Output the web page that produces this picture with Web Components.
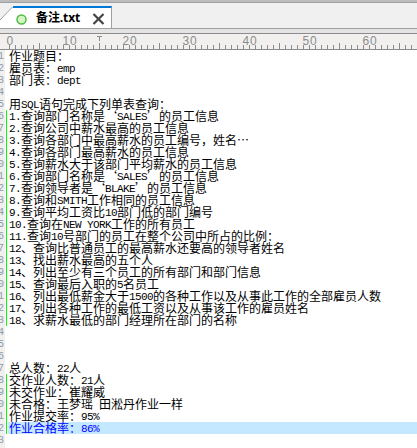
<!DOCTYPE html>
<html lang="zh-CN">
<head>
<meta charset="utf-8">
<title>备注.txt</title>
<style>html,body{margin:0;height:100%;overflow:hidden;background:#fff}</style>
</head>
<body>
<text-editor></text-editor>
<script>
class FileTab extends HTMLElement {
  connectedCallback() {
    this.attachShadow({mode: 'open'}).innerHTML = `
<style>
:host{display:flex;height:22px;font:bold 12px/22px "Open Sans","Noto Sans CJK SC",sans-serif;color:#000}
.slope{width:14px;height:22px;display:block;flex:none}
.tab{box-sizing:border-box;width:98px;height:22px;background:#fff;border-top:2px solid #0078d7;border-right:1px solid #a0a0a0;display:flex;align-items:center;flex:none}
.dot{width:11px;height:11px;margin-left:2px;flex:none;margin-top:2px}
.name{width:46px;margin-left:9px;white-space:nowrap;letter-spacing:-.1px}
.x{width:13px;height:12px;margin-left:10px;flex:none;margin-top:2px}
</style>
<svg class="slope" viewBox="0 0 14 22"><path d="M0 14 12.500 1H14V22H0Z" fill="#fff"/><path d="M0 14 12.500 1" stroke="#a0a0a0" fill="none"/><path d="M13 1H14" stroke="#0078d7" stroke-width="2"/></svg>
<div class="tab">
<svg class="dot" viewBox="0 0 11 11"><circle cx="5.500" cy="5.500" r="4.500" fill="#d2f7c4" stroke="#55b947" stroke-width="1.500"/></svg>
<span class="name"><slot></slot></span>
<svg class="x" viewBox="0 0 13 12"><path d="M1.500 1 11.500 11M11.500 1 1.500 11" stroke="#444" stroke-width="2.200"/></svg>
</div>`;
  }
}
class ColumnRuler extends HTMLElement {
  connectedCallback() {
    let ticks = '', labels = '';
    for (let i = 0; i < 69; i++) {
      const h = i % 10 === 0 ? 4 : i % 5 === 0 ? 6 : 4;
      ticks += `M${9.5 + i * 6} 16V${16 - h}`;
      if (i % 10 === 0) labels += i ? `<text x="${2.5 + i * 6}" y="12">${i / 10}</text><text x="${10 + i * 6}" y="12">0</text>` : `<text x="6.5" y="12">0</text>`;
    }
    this.attachShadow({mode: 'open'}).innerHTML = `
<style>:host{display:block;height:17px}svg{display:block}text{font:12px "Liberation Sans",sans-serif;fill:#8c8c8c}</style>
<svg width="417" height="17"><rect width="417" height="17" fill="#f1f0ee"/><path d="M0 .5H417M0 16.500H417" stroke="#8c8c8c"/><path d="${ticks}M97 3.500H102M99.500 3V8" stroke="#8c8c8c" fill="none"/>${labels}</svg>`;
  }
}
class TextLine extends HTMLElement {
  connectedCallback() {
    const body = (this.getAttribute('text') || '').replace(/[\x20-\x7e]+/g, '<i>$&</i>');
    this.attachShadow({mode: 'open'}).innerHTML = `
<style>
:host{display:flex;height:12px;font:12px/12px "Noto Sans CJK SC",sans-serif;color:#000;white-space:pre}
.no{box-sizing:border-box;width:5px;height:12px;flex:none;font:10px/13px "Liberation Mono",monospace;color:#8e9aaa;text-indent:-2px}
.bar{width:1px;margin-left:1px;margin-right:1px;flex:none}
:host([changed]) .bar{background:#0f0}
.body{flex:1;height:12px;padding-left:1px}
:host([current]) .body{background:#c4e8ff;color:#00f}
i{font:11px/10px "Liberation Mono",monospace;letter-spacing:-.601px;position:relative;top:-1px}
</style>
<span class="no">${this.getAttribute('no') % 10}</span><span class="bar"></span><span class="body">${body}</span>`;
  }
}
class TextEditor extends HTMLElement {
  connectedCallback() {
    const lines = `作业题目：
雇员表：emp
部门表：dept

用SQL语句完成下列单表查询：
1.查询部门名称是‘SALES’的员工信息
2.查询公司中薪水最高的员工信息
3.查询各部门中最高薪水的员工编号，姓名…
4.查询各部门最高薪水的员工信息
5.查询薪水大于该部门平均薪水的员工信息
6.查询部门名称是‘SALES’的员工信息
7.查询领导者是‘BLAKE’的员工信息
8.查询和SMITH工作相同的员工信息
9.查询平均工资比10部门低的部门编号
10.查询在NEW YORK工作的所有员工
11.查询10号部门的员工在整个公司中所占的比例：
12、查询比普通员工的最高薪水还要高的领导者姓名
13、找出薪水最高的五个人
14、列出至少有三个员工的所有部门和部门信息
15、查询最后入职的5名员工
16、列出最低薪金大于1500的各种工作以及从事此工作的全部雇员人数
17、列出各种工作的最低工资以及从事该工作的雇员姓名
18、求薪水最低的部门经理所在部门的名称



总人数：22人
交作业人数：21人
未交作业：崔耀威
未合格：王梦瑶 田淞丹作业一样
作业提交率：95%
作业合格率：86%

`.split('\n').slice(0, 33);
    const rows = lines.map((t, i) => {
      const n = i + 1;
      const changed = (n >= 6 && n <= 23) || (n >= 28 && n <= 32);
      return `<text-line no="${n}" text="${t}"${changed ? ' changed' : ''}${n === 32 ? ' current' : ''}></text-line>`;
    }).join('');
    this.attachShadow({mode: 'open'}).innerHTML = `
<style>
:host{display:block;width:417px;height:448px;overflow:hidden;background:#fff}
.strip{box-sizing:border-box;height:29px;background:#f0f0f0;border-top:2px solid #bcbcbc;border-bottom:1px solid #a0a0a0;box-shadow:inset 0 1px #a0a0a0;padding-top:4px}
.gap{height:4px;background:#e4e2e4}
main{background:linear-gradient(90deg,#f1f0ee 5px,#fff 5px);height:398px}
</style>
<div class="strip"><file-tab>备注.txt</file-tab></div><div class="gap"></div><column-ruler></column-ruler><main>${rows}</main>`;
  }
}
customElements.define('file-tab', FileTab);
customElements.define('column-ruler', ColumnRuler);
customElements.define('text-line', TextLine);
customElements.define('text-editor', TextEditor);
</script>
</body>
</html>
